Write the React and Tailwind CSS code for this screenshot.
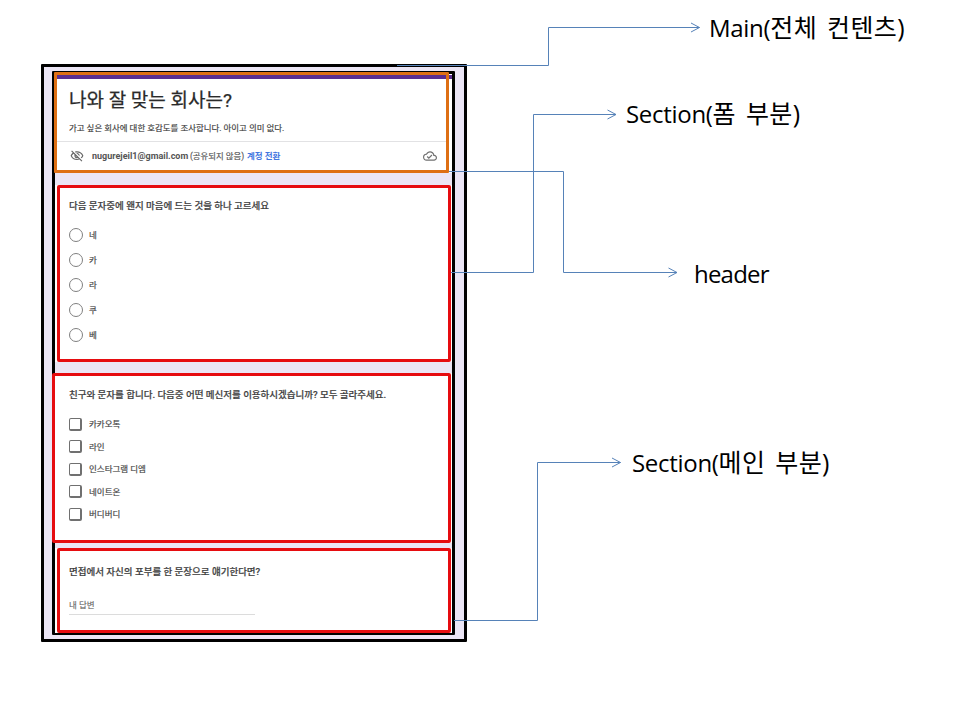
import { MdOutlineVisibilityOff, MdOutlineCloudDone } from 'react-icons/md';

const radioOptions = ['네', '카', '라', '쿠', '베'];
const checkOptions = ['카카오톡', '라인', '인스타그램 디엠', '네이트온', '버디버디'];

function Question({ children }) {
  return (
    <h2 className="h-4 whitespace-nowrap text-[9.5px] leading-4 font-medium text-[#3c3c3c] [-webkit-text-stroke:0.2px_#505050]">
      {children}
    </h2>
  );
}

function FormHeader() {
  return (
    <div className="flex h-[99px] bg-white">
      <header className="-mt-0.5 -ml-px h-[101px] w-[395px] shrink-0 rounded-[1px] border-3 border-[#de6f14]">
        <div className="h-1 bg-[#5b2e91]" />
        <div className="flex h-[63px] flex-col border-b border-[#e2e2e4] pl-3">
          <h1 className="mt-2 h-7 whitespace-nowrap text-[19px] leading-7 text-[#2a2a2a] [-webkit-text-stroke:0.25px_#2a2a2a]">
            나와 잘 맞는 회사는?
          </h1>
          <p className="mt-[5px] h-4 whitespace-nowrap text-[8.45px] leading-4 text-[#3c3c3c] [-webkit-text-stroke:0.15px_#3c3c3c]">
            가고 싶은 회사에 대한 호감도를 조사합니다. 아이고 의미 없다.
          </p>
        </div>
        <div className="flex h-[28px] items-center pr-[9px] pl-[13px] text-[8.5px] leading-4 whitespace-nowrap text-[#555]">
          <MdOutlineVisibilityOff className="size-[14px] shrink-0 text-[#666]" />
          <span className="ml-2 w-[96px] text-[9px] font-bold text-[#555]">nugurejeil1@gmail.com</span>
          <span className="ml-[2px] w-[55px] text-[8.4px] [-webkit-text-stroke:0.15px_#555]">(공유되지 않음)</span>
          <span className="ml-[2px] font-bold text-[#4175df]">계정 전환</span>
          <MdOutlineCloudDone className="ml-auto size-[14px] shrink-0 text-[#707070]" />
        </div>
      </header>
      <div className="mt-px h-1 grow bg-[#5b2e91]" />
    </div>
  );
}

function RadioSection() {
  return (
    <div className="mt-3 bg-white pl-0.5">
      <section className="h-[177px] w-[394px] rounded-[2px] border-3 border-[#e60c10] pt-[10px] pl-[9px]">
        <Question>다음 문자중에 왠지 마음에 드는 것을 하나 고르세요</Question>
        <ul className="mt-[8px]">
          {radioOptions.map((label) => (
            <li key={label} className="flex h-[25px] items-center gap-[6px] text-[8.5px] text-[#444]">
              <span className="mt-px size-[14px] rounded-full border-[1.4px] border-[#808080]" />
              <span className="leading-4 [-webkit-text-stroke:0.2px_#555]">{label}</span>
            </li>
          ))}
        </ul>
      </section>
    </div>
  );
}

function CheckSection() {
  return (
    <div className="mt-[11px] bg-white">
      <section className="-ml-[3px] h-[170px] w-[399px] rounded-[2px] border-3 border-[#e60c10] pt-[11px] pl-[14px]">
        <Question>친구와 문자를 합니다. 다음중 어떤 메신저를 이용하시겠습니까? 모두 골라주세요.</Question>
        <ul className="mt-[10px]">
          {checkOptions.map((label) => (
            <li key={label} className="flex h-[22.5px] items-center gap-[7px] text-[8.5px] text-[#444]">
              <span className="size-[13px] rounded-[2px] border border-r-2 border-b-2 border-[#707070]" />
              <span className="leading-4 [-webkit-text-stroke:0.2px_#555]">{label}</span>
            </li>
          ))}
        </ul>
      </section>
    </div>
  );
}

function AnswerSection() {
  return (
    <div className="mt-[5px] bg-white pl-0.5">
      <section className="h-[85px] w-[394px] rounded-[2px] border-3 border-[#e60c10] pt-[13px] pl-[9px]">
        <Question>면접에서 자신의 포부를 한 문장으로 얘기한다면?</Question>
        <div className="mt-[17px] h-[18px] w-[186px] border-b border-[#dcdcdc] text-[8.5px] leading-4 text-[#666] [-webkit-text-stroke:0.15px_#777]">
          내 답변
        </div>
      </section>
    </div>
  );
}

function Connectors() {
  return (
    <svg className="pointer-events-none absolute inset-0" width="960" height="720" fill="none" stroke="#5682b8">
      <path d="M397 65.5H548.5V27.5H699.5M691 23L699.5 27.5L691 32" />
      <path d="M451 272.5H533.5V114.5H616M607.5 110L616 114.5L607.5 119" />
      <path d="M449 171.5H563.5V272.5H677M668.5 268L677 272.5L668.5 277" />
      <path d="M454 620.5H537.5V462.5H620.5M612 458L620.5 462.5L612 467" />
    </svg>
  );
}

const labelClass = "absolute whitespace-nowrap text-2xl leading-8 text-black font-['Open_Sans','Noto_Sans_CJK_KR',sans-serif]";
const koreanClass = 'text-[25px] tracking-[0.4px] [word-spacing:3px]';

export default function App() {
  return (
    <div className="relative h-[720px] w-[960px] overflow-hidden bg-white pt-16 pl-[41px] font-[Roboto,'Noto_Sans_CJK_KR',sans-serif] antialiased">
      <main className="h-[578px] w-[426px] rounded-[1px] border-3 border-black bg-[#ebe5f5] pt-1 pl-2">
        <div className="h-[564px] w-[403px] rounded-[1px] border-3 border-black bg-[#ebe5f5]">
          <FormHeader />
          <RadioSection />
          <CheckSection />
          <AnswerSection />
        </div>
      </main>
      <Connectors />
      <div className={`${labelClass} top-[11px] left-[709px]`}>
        <span className="tracking-[-0.3px]">Main(</span>
        <span className={koreanClass}>전체 컨텐츠)</span>
      </div>
      <div className={`${labelClass} top-[97px] left-[626px]`}>
        <span className="tracking-[-0.3px]">Section(</span>
        <span className={koreanClass}>폼 부분)</span>
      </div>
      <div className={`${labelClass} top-[258px] left-[694px] tracking-[-0.8px]`}>header</div>
      <div className={`${labelClass} top-[446px] left-[632px]`}>
        <span className="tracking-[-0.3px]">Section(</span>
        <span className={koreanClass}>메인 부분)</span>
      </div>
    </div>
  );
}
